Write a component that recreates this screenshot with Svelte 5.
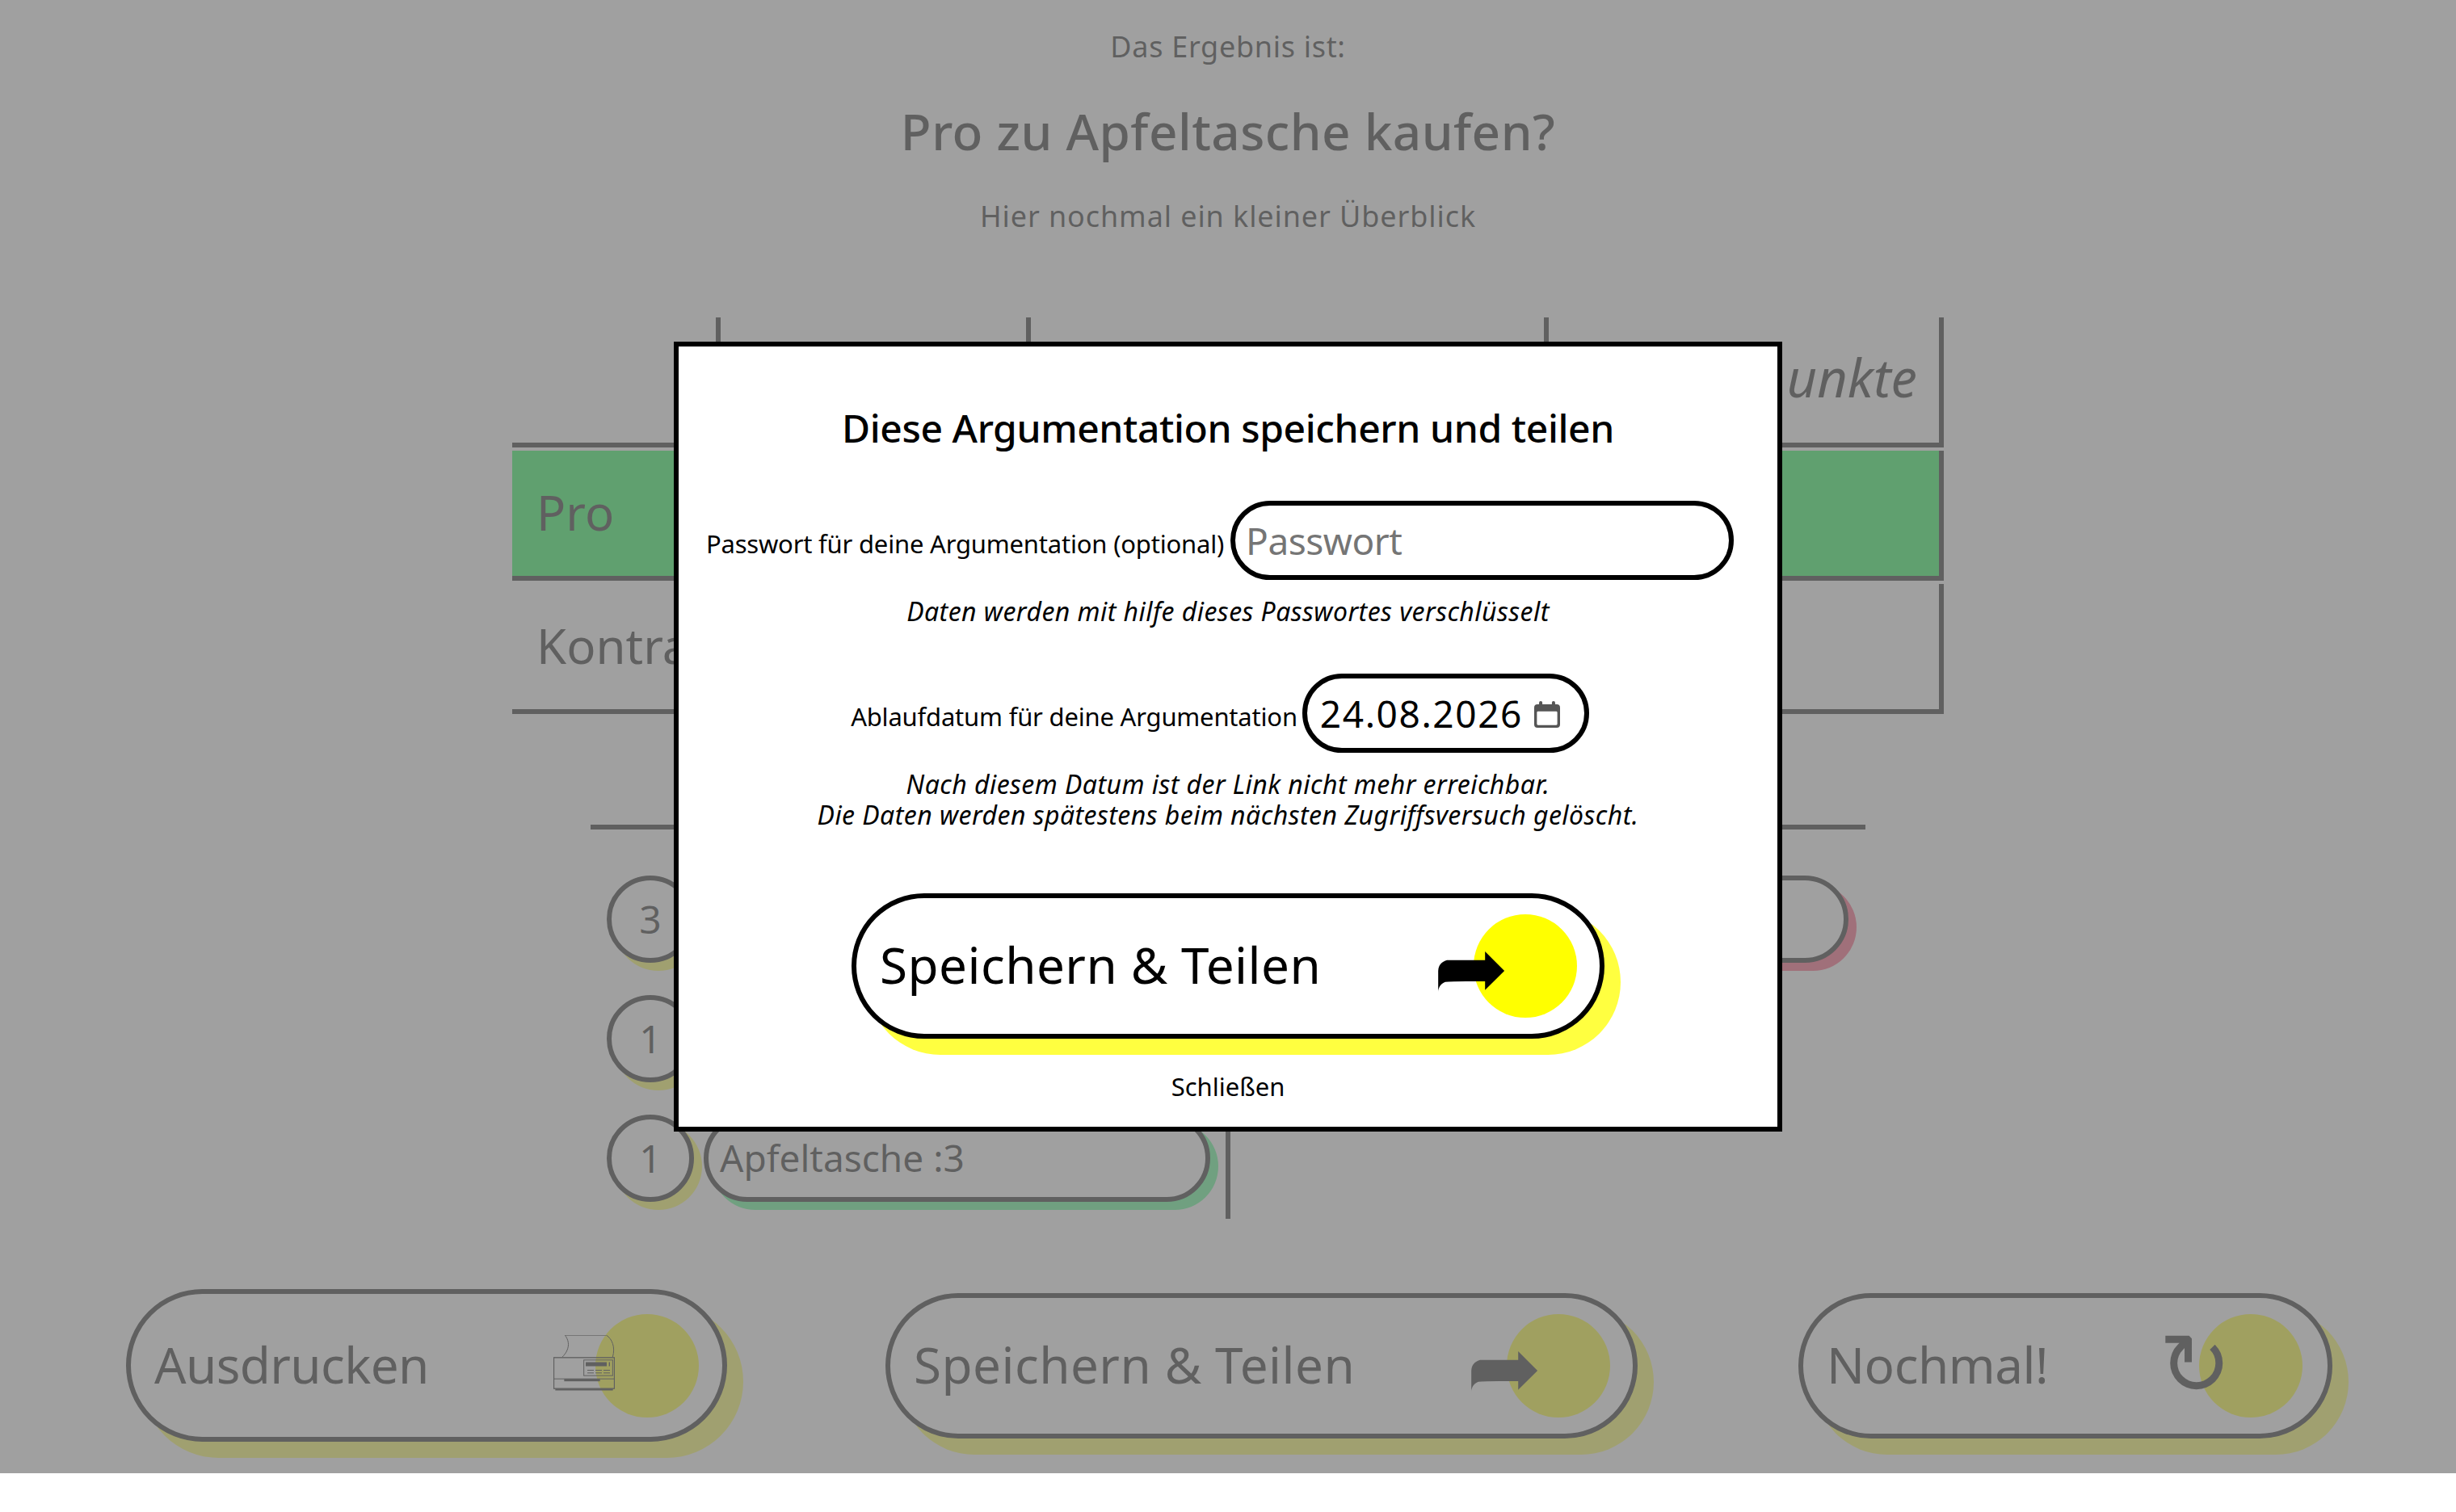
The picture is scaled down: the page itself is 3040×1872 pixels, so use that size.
<script>
  const rows = [
    { name: "Pro", cls: "pro" },
    { name: "Kontra", cls: "" },
  ];
  const args = [
    { points: 3, left: "", right: "" },
    { points: 1, left: "", right: null },
    { points: 1, left: "Apfeltasche :3", right: null },
  ];
  let password = $state("");
  let expires = $state("24.08.2026");
</script>

<div class="page">
  <p class="lead">Das Ergebnis ist:</p>
  <h1>Pro zu Apfeltasche kaufen?</h1>
  <p class="sub">Hier nochmal ein kleiner Überblick</p>

  <div class="table">
    <div class="cell head"></div>
    <div class="cell head"></div>
    <div class="cell head"></div>
    <div class="cell head points">unkte</div>
    {#each rows as row}
      <div class="cell row {row.cls}">{row.name}</div>
      <div class="cell row fill {row.cls}"></div>
      <div class="cell row fill {row.cls}"></div>
      <div class="cell row last {row.cls}"></div>
    {/each}
  </div>

  <div class="compare">
    <div class="col left">
      {#each args as a}
        <div class="arg">
          <span class="badge">{a.points}</span>
          <span class="pill green">{a.left}</span>
        </div>
      {/each}
    </div>
    <div class="col right">
      <div class="arg">
        <span class="badge">3</span>
        <span class="pill red"></span>
      </div>
    </div>
  </div>

  <div class="actions">
    <button class="btn print">
      <span class="label">Ausdrucken</span>
      <span class="dot"></span>
      <svg class="printer" viewBox="75 97 228 206" aria-hidden="true">
        <path d="M118 97H272C292 110 306 140 295 178M118 97C136 120 136 150 108 178" fill="none" stroke="#000" stroke-width="3" />
        <rect x="76.5" y="180" width="225" height="115" fill="none" stroke="#000" stroke-width="4" />
        <path d="M76 259H302" stroke="#000" stroke-width="3" />
        <rect x="115" y="259" width="133" height="9" />
        <rect x="82" y="296" width="214" height="6" />
        <rect x="188" y="189" width="107" height="58" fill="none" stroke="#000" stroke-width="3" />
        <rect x="195" y="197" width="78" height="15" />
        <rect x="281" y="197" width="4" height="15" />
        <path d="M201 227H225M231 227H255M261 227H285M201 237H225M231 237H255M261 237H285" stroke="#000" stroke-width="3" />
      </svg>
    </button>
    <button class="btn share">
      <span class="label">Speichern &amp; Teilen</span>
      <span class="dot"></span>
      <span class="arrow">➦</span>
    </button>
    <button class="btn again">
      <span class="label">Nochmal!</span>
      <span class="dot"></span>
      <span class="reload">↻</span>
    </button>
  </div>

  <div class="overlay">
    <div class="modal">
      <h2>Diese Argumentation speichern und teilen</h2>

      <div class="field">
        <label for="pw">Passwort für deine Argumentation (optional)</label>
        <input id="pw" class="pw" type="text" placeholder="Passwort" bind:value={password} />
      </div>
      <p class="note first">Daten werden mit hilfe dieses Passwortes verschlüsselt</p>

      <div class="field date-field">
        <label for="exp">Ablaufdatum für deine Argumentation</label>
        <div class="date">
          <input id="exp" type="text" bind:value={expires} />
          <svg class="cal" viewBox="0 0 95 98" aria-hidden="true">
            <path d="M24 0a6 6 0 0 1 6 6v6h35V6a6 6 0 0 1 12 0v6h6a12 12 0 0 1 12 12v62a12 12 0 0 1-12 12H12A12 12 0 0 1 0 86V24a12 12 0 0 1 12-12h6V6a6 6 0 0 1 6-6zM14 38a4 4 0 0 0-4 4v42a4 4 0 0 0 4 4h67a4 4 0 0 0 4-4V42a4 4 0 0 0-4-4z" fill-rule="evenodd" />
          </svg>
        </div>
      </div>
      <p class="note second">Nach diesem Datum ist der Link nicht mehr erreichbar.<br />Die Daten werden spätestens beim nächsten Zugriffsversuch gelöscht.</p>

      <button class="btn modal-btn">
        <span class="label">Speichern &amp; Teilen</span>
        <span class="dot"></span>
        <span class="arrow">➦</span>
      </button>

      <button class="close">Schließen</button>
    </div>
  </div>
</div>

<style>
  :global(body) {
    background: white;
  }
  .page {
    position: relative;
    height: 1824px;
    overflow: hidden;
    font-family: "Noto Sans", "Open Sans", sans-serif;
    color: black;
    text-align: center;
  }
  .lead,
  .sub {
    margin: 0;
    font-size: 36px;
    line-height: 48px;
    letter-spacing: 0.7px;
  }
  .lead {
    padding-top: 34px;
  }
  h1 {
    margin: 42px 0 0;
    font-size: 62px;
    line-height: 76px;
    font-weight: 500;
    letter-spacing: 0.45px;
  }
  .sub {
    margin-top: 44px;
    letter-spacing: 0.9px;
  }

  .table {
    display: grid;
    grid-template-columns: 258px 384px 641px 489px;
    grid-auto-rows: 161px;
    row-gap: 4px;
    width: 1772px;
    margin: 101px auto 0;
    text-align: left;
    font-size: 60px;
  }
  .cell {
    display: flex;
    align-items: center;
    padding: 0 0 4px 30px;
    border-bottom: 6px solid black;
    box-sizing: border-box;
  }
  .head {
    border-right: 6px solid black;
  }
  .points {
    justify-content: flex-end;
    padding: 0 27px 8px 0;
    font-size: 65px;
    font-style: italic;
  }
  .last {
    border-right: 6px solid black;
  }
  .pro {
    background: #00ff3c;
  }

  .compare {
    display: grid;
    grid-template-columns: 792px 786px;
    width: 1578px;
    height: 482px;
    margin: 137px auto 0;
    border-top: 6px solid black;
  }
  .col {
    display: flex;
    flex-direction: column;
    gap: 40px;
    padding-top: 57px;
  }
  .left {
    padding-left: 20px;
    padding-right: 19px;
    border-right: 6px solid black;
  }
  .right {
    padding-left: 20px;
    padding-right: 21px;
  }
  .arg {
    display: flex;
    gap: 12px;
    height: 108px;
  }
  .badge {
    flex: none;
    width: 108px;
    height: 108px;
    box-sizing: border-box;
    border: 6px solid black;
    border-radius: 50%;
    background: white;
    box-shadow: 10px 10px 0 #ffff40;
    font-size: 48px;
    line-height: 96px;
    text-align: center;
  }
  .pill {
    flex: 1;
    box-sizing: border-box;
    padding-left: 14px;
    border: 6px solid black;
    border-radius: 54px;
    background: white;
    font-size: 46px;
    line-height: 94px;
    text-align: left;
  }
  .green {
    box-shadow: 10px 10px 0 #40ff80;
  }
  .red {
    box-shadow: 10px 10px 0 #ff4068;
  }

  .actions {
    display: flex;
    align-items: center;
    padding-left: 156px;
    margin-top: 87px;
  }
  .btn {
    position: relative;
    display: flex;
    align-items: center;
    box-sizing: border-box;
    height: 180px;
    padding: 0 0 0 29px;
    border: 6px solid black;
    border-radius: 90px;
    background: white;
    box-shadow: 20px 20px 0 #ffff40;
    color: black;
    font-family: inherit;
    font-size: 62px;
    letter-spacing: 0.45px;
    text-align: left;
  }
  .print {
    width: 744px;
    height: 189px;
    border-radius: 95px;
    letter-spacing: -0.6px;
  }
  .share {
    width: 931px;
    margin-left: 196px;
  }
  .again {
    width: 661px;
    margin-left: 199px;
    letter-spacing: -0.5px;
  }
  .label {
    position: relative;
    padding-bottom: 4px;
  }
  .dot {
    position: absolute;
    top: 20px;
    right: 28px;
    width: 128px;
    height: 128px;
    border-radius: 50%;
    background: #ffff00;
  }
  .print .dot {
    top: 25px;
    right: 29px;
  }
  .again .dot {
    right: 31px;
  }
  .printer {
    position: absolute;
    left: 523px;
    top: 51px;
    width: 76px;
    height: 69px;
  }
  .arrow {
    position: absolute;
    right: 112px;
    top: 30px;
    font-family: "DejaVu Sans", sans-serif;
    font-size: 112px;
    line-height: 112px;
  }
  .reload {
    position: absolute;
    right: 119px;
    top: 21px;
    font-family: "DejaVu Sans", sans-serif;
    font-size: 108px;
    line-height: 124px;
  }

  .overlay {
    position: absolute;
    inset: 0;
    display: flex;
    align-items: center;
    justify-content: center;
    background: rgba(128, 128, 128, 0.75);
  }
  .modal {
    box-sizing: border-box;
    display: flex;
    flex-direction: column;
    align-items: center;
    width: 1372px;
    height: 978px;
    padding: 0;
    border: 6px solid black;
    background: white;
  }
  h2 {
    margin: 67px 0 0;
    font-size: 48px;
    line-height: 68px;
    font-weight: 500;
    letter-spacing: -0.4px;
    white-space: nowrap;
  }
  .field {
    display: flex;
    align-items: flex-end;
    gap: 8px;
    margin: 56px 20px 0 0;
    font-size: 31px;
    letter-spacing: -0.2px;
    white-space: nowrap;
  }
  label {
    line-height: 44px;
    padding-bottom: 23px;
  }
  input {
    font-family: inherit;
    color: black;
    background: white;
    outline: none;
  }
  .pw {
    box-sizing: border-box;
    width: 623px;
    height: 98px;
    padding: 0 13px;
    border: 6px solid black;
    border-radius: 49px;
    font-size: 46px;
    letter-spacing: -0.5px;
  }
  .pw::placeholder {
    color: #757575;
  }
  .note {
    margin: 0;
    font-size: 32px;
    line-height: 38px;
    font-style: italic;
    letter-spacing: 0.45px;
    text-align: center;
  }
  .note.first {
    margin-top: 20px;
  }
  .date-field {
    gap: 6px;
    margin-top: 58px;
  }
  .date {
    position: relative;
    display: flex;
    align-items: center;
    box-sizing: border-box;
    width: 355px;
    height: 98px;
    padding-left: 16px;
    border: 6px solid black;
    border-radius: 49px;
  }
  .date input {
    width: 262px;
    padding: 0;
    border: none;
    font-size: 46px;
    letter-spacing: 1.6px;
  }
  .cal {
    position: absolute;
    left: 281px;
    top: 28px;
    width: 32px;
    height: 33px;
    fill: #555;
  }
  .note.second {
    margin-top: 20px;
  }
  .modal-btn {
    flex: none;
    width: 932px;
    margin-top: 78px;
  }
  .close {
    margin-top: 38px;
    padding: 0;
    border: none;
    background: none;
    font-family: inherit;
    font-size: 31px;
    color: black;
  }
</style>
